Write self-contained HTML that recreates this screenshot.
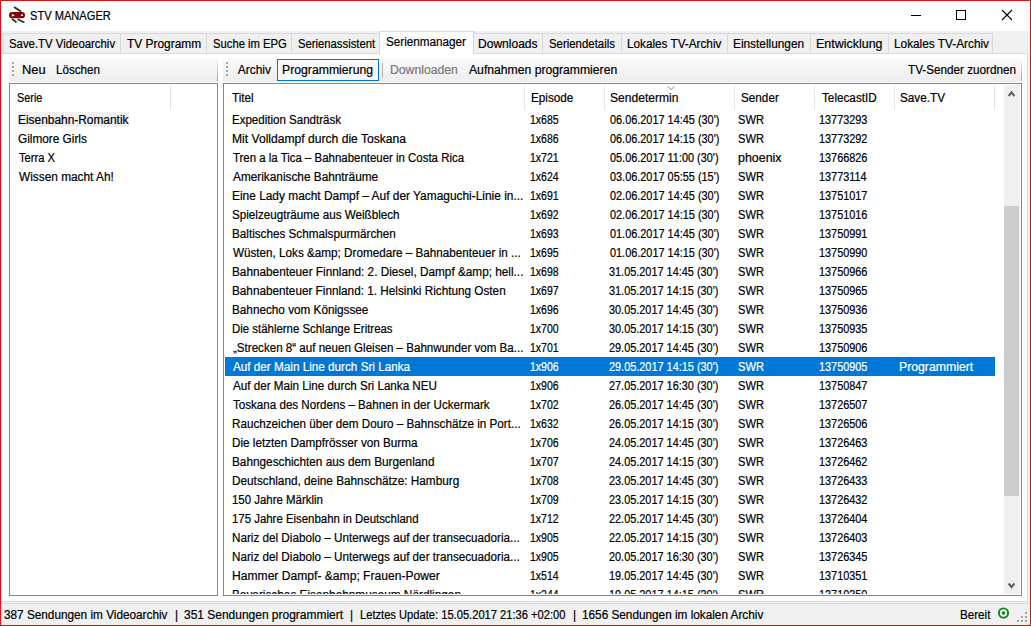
<!DOCTYPE html><html><head><meta charset="utf-8"><style>
*{margin:0;padding:0;box-sizing:border-box}
html,body{width:1031px;height:626px;overflow:hidden;background:#f0f0f0}
body{position:relative;font-family:"Liberation Sans",sans-serif;font-size:12px;color:#000}
.a{position:absolute}
.t{position:absolute;white-space:nowrap;line-height:19px;height:19px;transform-origin:0 0;-webkit-text-stroke:0.2px currentColor}
#win{position:absolute;left:0;top:0;width:1031px;height:626px;border:1px solid #dc1212}
</style></head><body>
<div class="a" style="left:1px;top:1px;width:1029px;height:30px;background:#fff"></div>
<svg class="a" style="left:0;top:0" width="32" height="26" viewBox="0 0 32 26">
<path d="M14.6 7.4 L20.6 11.2" stroke="#2e3333" stroke-width="1.9" stroke-linecap="round"/>
<path d="M12.4 19.3 L16 22" stroke="#2e3333" stroke-width="1.7" stroke-linecap="round"/>
<path d="M18.2 19.4 L23.8 22.2" stroke="#2e3333" stroke-width="1.7" stroke-linecap="round"/>
<rect x="9" y="11.9" width="16" height="6.4" rx="3.2" fill="#820000"/>
<path d="M11.8 14 L15 15.3 L11.8 16.7 Z" fill="#fff"/>
<rect x="20.9" y="14.5" width="2.1" height="1.5" fill="#fff"/>
</svg>
<div class="t" style="left:29.67px;top:7px;transform:scaleX(0.9256)">STV MANAGER</div>
<div class="a" style="left:911px;top:15px;width:10px;height:1px;background:#000"></div>
<div class="a" style="left:956px;top:10px;width:10px;height:10px;border:1px solid #000"></div>
<svg class="a" style="left:1001px;top:9px" width="12" height="12" viewBox="0 0 12 12"><path d="M1 1 L11 11 M11 1 L1 11" stroke="#000" stroke-width="1.1"/></svg>
<div class="a" style="left:1px;top:53px;width:1027px;height:549px;background:#fff;border:1px solid #dadada;border-left:none"></div>
<div class="a" style="left:3px;top:33px;width:118px;height:21px;background:#f0f0f0;border:1px solid #d9d9d9"></div>
<div class="t" style="left:8.85px;top:35px;transform:scaleX(0.9486)">Save.TV Videoarchiv</div>
<div class="a" style="left:120px;top:33px;width:87px;height:21px;background:#f0f0f0;border:1px solid #d9d9d9"></div>
<div class="t" style="left:127.30px;top:35px;transform:scaleX(0.9932)">TV Programm</div>
<div class="a" style="left:206px;top:33px;width:86px;height:21px;background:#f0f0f0;border:1px solid #d9d9d9"></div>
<div class="t" style="left:212.56px;top:35px;transform:scaleX(0.9377)">Suche im EPG</div>
<div class="a" style="left:291px;top:33px;width:91px;height:21px;background:#f0f0f0;border:1px solid #d9d9d9"></div>
<div class="t" style="left:297.86px;top:35px;transform:scaleX(0.9395)">Serienassistent</div>
<div class="a" style="left:471px;top:33px;width:72px;height:21px;background:#f0f0f0;border:1px solid #d9d9d9"></div>
<div class="t" style="left:477.60px;top:35px;transform:scaleX(1.0034)">Downloads</div>
<div class="a" style="left:542px;top:33px;width:80px;height:21px;background:#f0f0f0;border:1px solid #d9d9d9"></div>
<div class="t" style="left:549.15px;top:35px;transform:scaleX(0.9500)">Seriendetails</div>
<div class="a" style="left:621px;top:33px;width:107px;height:21px;background:#f0f0f0;border:1px solid #d9d9d9"></div>
<div class="t" style="left:627.02px;top:35px;transform:scaleX(0.9781)">Lokales TV-Archiv</div>
<div class="a" style="left:727px;top:33px;width:84px;height:21px;background:#f0f0f0;border:1px solid #d9d9d9"></div>
<div class="t" style="left:733.41px;top:35px;transform:scaleX(0.9873)">Einstellungen</div>
<div class="a" style="left:810px;top:33px;width:79px;height:21px;background:#f0f0f0;border:1px solid #d9d9d9"></div>
<div class="t" style="left:816.46px;top:35px;transform:scaleX(1.0387)">Entwicklung</div>
<div class="a" style="left:888px;top:33px;width:105px;height:21px;background:#f0f0f0;border:1px solid #d9d9d9"></div>
<div class="t" style="left:893.72px;top:35px;transform:scaleX(0.9844)">Lokales TV-Archiv</div>
<div class="a" style="left:379px;top:31px;width:95px;height:23px;background:#fff;border:1px solid #d9d9d9;border-bottom:none"></div>
<div class="t" style="left:386.32px;top:33px;transform:scaleX(0.9753)">Serienmanager</div>
<div class="a" style="left:9px;top:58px;width:209px;height:24px;border-radius:3px;background:linear-gradient(#fafafa,#ededed)"></div><div class="a" style="left:217px;top:60px;width:1px;height:21px;background:linear-gradient(#f2f2f2,#9a9a9a)"></div>
<div class="a" style="left:223px;top:58px;width:799px;height:24px;border-radius:3px;background:linear-gradient(#fafafa,#ededed)"></div><div class="a" style="left:1021px;top:60px;width:1px;height:21px;background:linear-gradient(#f2f2f2,#9a9a9a)"></div>
<div class="a" style="left:12px;top:62px;width:2px;height:2px;background:#a6a6a6"></div><div class="a" style="left:12px;top:66px;width:2px;height:2px;background:#a6a6a6"></div><div class="a" style="left:12px;top:70px;width:2px;height:2px;background:#a6a6a6"></div><div class="a" style="left:12px;top:74px;width:2px;height:2px;background:#a6a6a6"></div>
<div class="a" style="left:226px;top:62px;width:2px;height:2px;background:#a6a6a6"></div><div class="a" style="left:226px;top:66px;width:2px;height:2px;background:#a6a6a6"></div><div class="a" style="left:226px;top:70px;width:2px;height:2px;background:#a6a6a6"></div><div class="a" style="left:226px;top:74px;width:2px;height:2px;background:#a6a6a6"></div>
<div class="t" style="left:22.33px;top:61px;transform:scaleX(1.0700)">Neu</div>
<div class="t" style="left:55.53px;top:61px;transform:scaleX(0.9705)">Löschen</div>
<div class="t" style="left:237.70px;top:61px;transform:scaleX(1.0000)">Archiv</div>
<div class="a" style="left:277px;top:59px;width:102px;height:22px;border:1px solid #0078d7;background:#f8f8f8"></div>
<div class="t" style="left:281.68px;top:61px;transform:scaleX(1.0193)">Programmierung</div>
<div class="a" style="left:382px;top:63px;width:1px;height:15px;background:#b8b8b8"></div>
<div class="t" style="left:389.58px;top:61px;color:#787878;transform:scaleX(1.0169)">Downloaden</div>
<div class="t" style="left:468.50px;top:61px;transform:scaleX(1.0144)">Aufnahmen programmieren</div>
<div class="t" style="left:907.80px;top:61px;transform:scaleX(0.9755)">TV-Sender zuordnen</div>
<div class="a" style="left:9px;top:83px;width:209px;height:513px;border:1px solid #828790;background:#fff"></div>
<div class="a" style="left:170px;top:85px;width:1px;height:25px;background:#e5e5e5"></div>
<div class="t" style="left:16.90px;top:89px;transform:scaleX(0.9037)">Serie</div>
<div class="a" style="left:17px;top:112px;width:112px;height:15px;background:#f0f0f0"></div>
<div class="t" style="left:18.01px;top:111px;transform:scaleX(0.9918)">Eisenbahn-Romantik</div>
<div class="t" style="left:17.52px;top:130px;transform:scaleX(0.9841)">Gilmore Girls</div>
<div class="t" style="left:18.90px;top:149px;transform:scaleX(0.9316)">Terra X</div>
<div class="t" style="left:18.90px;top:168px;transform:scaleX(0.9874)">Wissen macht Ah!</div>
<div class="a" style="left:223px;top:83px;width:799px;height:513px;border:1px solid #828790;background:#fff;overflow:hidden">
<div class="a" style="left:300px;top:1px;width:1px;height:25px;background:#e5e5e5"></div>
<div class="a" style="left:380px;top:1px;width:1px;height:25px;background:#e5e5e5"></div>
<div class="a" style="left:510px;top:1px;width:1px;height:25px;background:#e5e5e5"></div>
<div class="a" style="left:590px;top:1px;width:1px;height:25px;background:#e5e5e5"></div>
<div class="a" style="left:670px;top:1px;width:1px;height:25px;background:#e5e5e5"></div>
<div class="a" style="left:770px;top:1px;width:1px;height:25px;background:#e5e5e5"></div>
<div class="t" style="left:7.80px;top:5px;transform:scaleX(0.9770)">Titel</div>
<div class="t" style="left:306.72px;top:5px;transform:scaleX(0.9770)">Episode</div>
<div class="t" style="left:386.49px;top:5px;transform:scaleX(1.0061)">Sendetermin</div>
<div class="t" style="left:516.62px;top:5px;transform:scaleX(0.9770)">Sender</div>
<div class="t" style="left:597.90px;top:5px;transform:scaleX(0.9770)">TelecastID</div>
<div class="t" style="left:676.32px;top:5px;transform:scaleX(0.9770)">Save.TV</div>
<svg class="a" style="left:443px;top:1px" width="9" height="6" viewBox="0 0 9 6"><path d="M0.5 1.2 L4 4.6 L7.5 1.2" stroke="#8a8a8a" fill="none" stroke-width="1"/></svg>
<div class="a" style="left:0;top:26px;width:780px;height:484px;overflow:hidden">
<div class="t" style="left:8.14px;top:1px;transform:scaleX(0.9607)">Expedition Sandträsk</div>
<div class="t" style="left:305.53px;top:1px;transform:scaleX(0.8742)">1x685</div>
<div class="t" style="left:385.60px;top:1px;transform:scaleX(0.9083)">06.06.2017 14:45 (30')</div>
<div class="t" style="left:514.37px;top:1px;transform:scaleX(0.9269)">SWR</div>
<div class="t" style="left:594.99px;top:1px;transform:scaleX(0.9058)">13773293</div>
<div class="t" style="left:8.09px;top:20px;transform:scaleX(1.0088)">Mit Volldampf durch die Toskana</div>
<div class="t" style="left:305.53px;top:20px;transform:scaleX(0.8742)">1x686</div>
<div class="t" style="left:385.60px;top:20px;transform:scaleX(0.9083)">06.06.2017 14:15 (30')</div>
<div class="t" style="left:514.37px;top:20px;transform:scaleX(0.9269)">SWR</div>
<div class="t" style="left:594.99px;top:20px;transform:scaleX(0.9058)">13773292</div>
<div class="t" style="left:9.10px;top:39px;transform:scaleX(0.9533)">Tren a la Tica – Bahnabenteuer in Costa Rica</div>
<div class="t" style="left:305.53px;top:39px;transform:scaleX(0.8742)">1x721</div>
<div class="t" style="left:385.60px;top:39px;transform:scaleX(0.9083)">05.06.2017 11:00 (30')</div>
<div class="t" style="left:514.26px;top:39px;transform:scaleX(1.0366)">phoenix</div>
<div class="t" style="left:594.99px;top:39px;transform:scaleX(0.9058)">13766826</div>
<div class="t" style="left:9.10px;top:58px;transform:scaleX(0.9844)">Amerikanische Bahnträume</div>
<div class="t" style="left:305.53px;top:58px;transform:scaleX(0.8742)">1x624</div>
<div class="t" style="left:385.60px;top:58px;transform:scaleX(0.9083)">03.06.2017 05:55 (15')</div>
<div class="t" style="left:514.37px;top:58px;transform:scaleX(0.9269)">SWR</div>
<div class="t" style="left:594.99px;top:58px;transform:scaleX(0.9058)">13773114</div>
<div class="t" style="left:8.11px;top:77px;transform:scaleX(0.9918)">Eine Lady macht Dampf – Auf der Yamaguchi-Linie in...</div>
<div class="t" style="left:305.53px;top:77px;transform:scaleX(0.8742)">1x691</div>
<div class="t" style="left:385.60px;top:77px;transform:scaleX(0.9083)">02.06.2017 14:45 (30')</div>
<div class="t" style="left:514.37px;top:77px;transform:scaleX(0.9269)">SWR</div>
<div class="t" style="left:594.99px;top:77px;transform:scaleX(0.9058)">13751017</div>
<div class="t" style="left:8.13px;top:96px;transform:scaleX(0.9713)">Spielzeugträume aus Weißblech</div>
<div class="t" style="left:305.53px;top:96px;transform:scaleX(0.8742)">1x692</div>
<div class="t" style="left:385.60px;top:96px;transform:scaleX(0.9083)">02.06.2017 14:15 (30')</div>
<div class="t" style="left:514.37px;top:96px;transform:scaleX(0.9269)">SWR</div>
<div class="t" style="left:594.99px;top:96px;transform:scaleX(0.9058)">13751016</div>
<div class="t" style="left:8.13px;top:115px;transform:scaleX(0.9749)">Baltisches Schmalspurmärchen</div>
<div class="t" style="left:305.53px;top:115px;transform:scaleX(0.8742)">1x693</div>
<div class="t" style="left:385.60px;top:115px;transform:scaleX(0.9083)">01.06.2017 14:45 (30')</div>
<div class="t" style="left:514.37px;top:115px;transform:scaleX(0.9269)">SWR</div>
<div class="t" style="left:594.99px;top:115px;transform:scaleX(0.9058)">13750991</div>
<div class="t" style="left:9.10px;top:134px;transform:scaleX(0.9739)">Wüsten, Loks &amp;amp; Dromedare – Bahnabenteuer in ...</div>
<div class="t" style="left:305.53px;top:134px;transform:scaleX(0.8742)">1x695</div>
<div class="t" style="left:385.60px;top:134px;transform:scaleX(0.9083)">01.06.2017 14:15 (30')</div>
<div class="t" style="left:514.37px;top:134px;transform:scaleX(0.9269)">SWR</div>
<div class="t" style="left:594.99px;top:134px;transform:scaleX(0.9058)">13750990</div>
<div class="t" style="left:8.12px;top:153px;transform:scaleX(0.9817)">Bahnabenteuer Finnland: 2. Diesel, Dampf &amp;amp; hell...</div>
<div class="t" style="left:305.53px;top:153px;transform:scaleX(0.8742)">1x698</div>
<div class="t" style="left:384.69px;top:153px;transform:scaleX(0.9083)">31.05.2017 14:45 (30')</div>
<div class="t" style="left:514.37px;top:153px;transform:scaleX(0.9269)">SWR</div>
<div class="t" style="left:594.99px;top:153px;transform:scaleX(0.9058)">13750966</div>
<div class="t" style="left:8.12px;top:172px;transform:scaleX(0.9791)">Bahnabenteuer Finnland: 1. Helsinki Richtung Osten</div>
<div class="t" style="left:305.53px;top:172px;transform:scaleX(0.8742)">1x697</div>
<div class="t" style="left:384.69px;top:172px;transform:scaleX(0.9083)">31.05.2017 14:15 (30')</div>
<div class="t" style="left:514.37px;top:172px;transform:scaleX(0.9269)">SWR</div>
<div class="t" style="left:594.99px;top:172px;transform:scaleX(0.9058)">13750965</div>
<div class="t" style="left:8.12px;top:191px;transform:scaleX(0.9783)">Bahnecho vom Königssee</div>
<div class="t" style="left:305.53px;top:191px;transform:scaleX(0.8742)">1x696</div>
<div class="t" style="left:384.69px;top:191px;transform:scaleX(0.9083)">30.05.2017 14:45 (30')</div>
<div class="t" style="left:514.37px;top:191px;transform:scaleX(0.9269)">SWR</div>
<div class="t" style="left:594.99px;top:191px;transform:scaleX(0.9058)">13750936</div>
<div class="t" style="left:8.15px;top:210px;transform:scaleX(0.9515)">Die stählerne Schlange Eritreas</div>
<div class="t" style="left:305.53px;top:210px;transform:scaleX(0.8742)">1x700</div>
<div class="t" style="left:384.69px;top:210px;transform:scaleX(0.9083)">30.05.2017 14:15 (30')</div>
<div class="t" style="left:514.37px;top:210px;transform:scaleX(0.9269)">SWR</div>
<div class="t" style="left:594.99px;top:210px;transform:scaleX(0.9058)">13750935</div>
<div class="t" style="left:9.10px;top:229px;transform:scaleX(0.9653)">„Strecken 8“ auf neuen Gleisen – Bahnwunder vom Ba...</div>
<div class="t" style="left:305.53px;top:229px;transform:scaleX(0.8742)">1x701</div>
<div class="t" style="left:384.69px;top:229px;transform:scaleX(0.9083)">29.05.2017 14:45 (30')</div>
<div class="t" style="left:514.37px;top:229px;transform:scaleX(0.9269)">SWR</div>
<div class="t" style="left:594.99px;top:229px;transform:scaleX(0.9058)">13750906</div>
<div class="a" style="left:1px;top:247px;width:770px;height:19px;background:#0078d7"></div>
<div class="t" style="left:9.10px;top:248px;color:#fff;transform:scaleX(0.9762)">Auf der Main Line durch Sri Lanka</div>
<div class="t" style="left:305.53px;top:248px;color:#fff;transform:scaleX(0.8742)">1x906</div>
<div class="t" style="left:384.69px;top:248px;color:#fff;transform:scaleX(0.9083)">29.05.2017 14:15 (30')</div>
<div class="t" style="left:514.37px;top:248px;color:#fff;transform:scaleX(0.9269)">SWR</div>
<div class="t" style="left:594.99px;top:248px;color:#fff;transform:scaleX(0.9058)">13750905</div>
<div class="t" style="left:674.78px;top:248px;color:#fff;transform:scaleX(1.0208)">Programmiert</div>
<div class="t" style="left:9.10px;top:267px;transform:scaleX(0.9708)">Auf der Main Line durch Sri Lanka NEU</div>
<div class="t" style="left:305.53px;top:267px;transform:scaleX(0.8742)">1x906</div>
<div class="t" style="left:384.69px;top:267px;transform:scaleX(0.9083)">27.05.2017 16:30 (30')</div>
<div class="t" style="left:514.37px;top:267px;transform:scaleX(0.9269)">SWR</div>
<div class="t" style="left:594.99px;top:267px;transform:scaleX(0.9058)">13750847</div>
<div class="t" style="left:9.10px;top:286px;transform:scaleX(0.9668)">Toskana des Nordens – Bahnen in der Uckermark</div>
<div class="t" style="left:305.53px;top:286px;transform:scaleX(0.8742)">1x702</div>
<div class="t" style="left:384.69px;top:286px;transform:scaleX(0.9083)">26.05.2017 14:45 (30')</div>
<div class="t" style="left:514.37px;top:286px;transform:scaleX(0.9269)">SWR</div>
<div class="t" style="left:594.99px;top:286px;transform:scaleX(0.9058)">13726507</div>
<div class="t" style="left:8.13px;top:305px;transform:scaleX(0.9725)">Rauchzeichen über dem Douro – Bahnschätze in Port...</div>
<div class="t" style="left:305.53px;top:305px;transform:scaleX(0.8742)">1x632</div>
<div class="t" style="left:384.69px;top:305px;transform:scaleX(0.9083)">26.05.2017 14:15 (30')</div>
<div class="t" style="left:514.37px;top:305px;transform:scaleX(0.9269)">SWR</div>
<div class="t" style="left:594.99px;top:305px;transform:scaleX(0.9058)">13726506</div>
<div class="t" style="left:8.12px;top:324px;transform:scaleX(0.9762)">Die letzten Dampfrösser von Burma</div>
<div class="t" style="left:305.53px;top:324px;transform:scaleX(0.8742)">1x706</div>
<div class="t" style="left:384.69px;top:324px;transform:scaleX(0.9083)">24.05.2017 14:45 (30')</div>
<div class="t" style="left:514.37px;top:324px;transform:scaleX(0.9269)">SWR</div>
<div class="t" style="left:594.99px;top:324px;transform:scaleX(0.9058)">13726463</div>
<div class="t" style="left:8.12px;top:343px;transform:scaleX(0.9820)">Bahngeschichten aus dem Burgenland</div>
<div class="t" style="left:305.53px;top:343px;transform:scaleX(0.8742)">1x707</div>
<div class="t" style="left:384.69px;top:343px;transform:scaleX(0.9083)">24.05.2017 14:15 (30')</div>
<div class="t" style="left:514.37px;top:343px;transform:scaleX(0.9269)">SWR</div>
<div class="t" style="left:594.99px;top:343px;transform:scaleX(0.9058)">13726462</div>
<div class="t" style="left:8.12px;top:362px;transform:scaleX(0.9817)">Deutschland, deine Bahnschätze: Hamburg</div>
<div class="t" style="left:305.53px;top:362px;transform:scaleX(0.8742)">1x708</div>
<div class="t" style="left:384.69px;top:362px;transform:scaleX(0.9083)">23.05.2017 14:45 (30')</div>
<div class="t" style="left:514.37px;top:362px;transform:scaleX(0.9269)">SWR</div>
<div class="t" style="left:594.99px;top:362px;transform:scaleX(0.9058)">13726433</div>
<div class="t" style="left:8.15px;top:381px;transform:scaleX(0.9532)">150 Jahre Märklin</div>
<div class="t" style="left:305.53px;top:381px;transform:scaleX(0.8742)">1x709</div>
<div class="t" style="left:384.69px;top:381px;transform:scaleX(0.9083)">23.05.2017 14:15 (30')</div>
<div class="t" style="left:514.37px;top:381px;transform:scaleX(0.9269)">SWR</div>
<div class="t" style="left:594.99px;top:381px;transform:scaleX(0.9058)">13726432</div>
<div class="t" style="left:8.15px;top:400px;transform:scaleX(0.9508)">175 Jahre Eisenbahn in Deutschland</div>
<div class="t" style="left:305.53px;top:400px;transform:scaleX(0.8742)">1x712</div>
<div class="t" style="left:384.69px;top:400px;transform:scaleX(0.9083)">22.05.2017 14:45 (30')</div>
<div class="t" style="left:514.37px;top:400px;transform:scaleX(0.9269)">SWR</div>
<div class="t" style="left:594.99px;top:400px;transform:scaleX(0.9058)">13726404</div>
<div class="t" style="left:8.13px;top:419px;transform:scaleX(0.9741)">Nariz del Diabolo – Unterwegs auf der transecuadoria...</div>
<div class="t" style="left:305.53px;top:419px;transform:scaleX(0.8742)">1x905</div>
<div class="t" style="left:384.69px;top:419px;transform:scaleX(0.9083)">22.05.2017 14:15 (30')</div>
<div class="t" style="left:514.37px;top:419px;transform:scaleX(0.9269)">SWR</div>
<div class="t" style="left:594.99px;top:419px;transform:scaleX(0.9058)">13726403</div>
<div class="t" style="left:8.13px;top:438px;transform:scaleX(0.9741)">Nariz del Diabolo – Unterwegs auf der transecuadoria...</div>
<div class="t" style="left:305.53px;top:438px;transform:scaleX(0.8742)">1x905</div>
<div class="t" style="left:384.69px;top:438px;transform:scaleX(0.9083)">20.05.2017 16:30 (30')</div>
<div class="t" style="left:514.37px;top:438px;transform:scaleX(0.9269)">SWR</div>
<div class="t" style="left:594.99px;top:438px;transform:scaleX(0.9058)">13726345</div>
<div class="t" style="left:8.09px;top:457px;transform:scaleX(1.0083)">Hammer Dampf- &amp;amp; Frauen-Power</div>
<div class="t" style="left:305.53px;top:457px;transform:scaleX(0.8742)">1x514</div>
<div class="t" style="left:384.69px;top:457px;transform:scaleX(0.9083)">19.05.2017 14:45 (30')</div>
<div class="t" style="left:514.37px;top:457px;transform:scaleX(0.9269)">SWR</div>
<div class="t" style="left:594.99px;top:457px;transform:scaleX(0.9058)">13710351</div>
<div class="t" style="left:8.12px;top:476px;transform:scaleX(0.9835)">Bayerisches Eisenbahnmuseum Nördlingen</div>
<div class="t" style="left:305.53px;top:476px;transform:scaleX(0.8742)">1x244</div>
<div class="t" style="left:384.69px;top:476px;transform:scaleX(0.9083)">19.05.2017 14:15 (30')</div>
<div class="t" style="left:514.37px;top:476px;transform:scaleX(0.9269)">SWR</div>
<div class="t" style="left:594.99px;top:476px;transform:scaleX(0.9058)">13710350</div>
</div>
<div class="a" style="left:780px;top:1px;width:16px;height:509px;background:#f0f0f0"></div>
<div class="a" style="left:780px;top:122px;width:15px;height:290px;background:#cdcdcd"></div>
<svg class="a" style="left:783px;top:6px" width="10" height="8" viewBox="0 0 10 8"><path d="M1.6 6.0 L4.5 2.4 L7.4 6.0" stroke="#5d5d5d" fill="none" stroke-width="2"/></svg>
<svg class="a" style="left:783px;top:498px" width="10" height="8" viewBox="0 0 10 8"><path d="M1.6 1.5 L4.5 5.1 L7.4 1.5" stroke="#5d5d5d" fill="none" stroke-width="2"/></svg>
</div>
<div class="a" style="left:1px;top:603px;width:1028px;height:22px;background:#f0f0f0;border-top:1px solid #dadada"></div>
<div class="t" style="left:4.02px;top:606px;transform:scaleX(0.9813)">387 Sendungen im Videoarchiv</div>
<div class="t" style="left:175.02px;top:606px;transform:scaleX(0.9770)">|</div>
<div class="t" style="left:184.30px;top:606px;transform:scaleX(0.9975)">351 Sendungen programmiert</div>
<div class="t" style="left:350.12px;top:606px;transform:scaleX(0.9770)">|</div>
<div class="t" style="left:359.77px;top:606px;transform:scaleX(0.9291)">Letztes Update: 15.05.2017 21:36 +02:00</div>
<div class="t" style="left:572.62px;top:606px;transform:scaleX(0.9770)">|</div>
<div class="t" style="left:581.62px;top:606px;transform:scaleX(0.9810)">1656 Sendungen im lokalen Archiv</div>
<div class="t" style="left:959.83px;top:606px;transform:scaleX(0.9700)">Bereit</div>
<svg class="a" style="left:997px;top:607px" width="12" height="12" viewBox="0 0 12 12"><circle cx="6.5" cy="6" r="4.6" stroke="#0a850a" stroke-width="1.9" fill="#fff"/><circle cx="6.5" cy="6" r="1.8" fill="#0a850a"/></svg>
<div class="a" style="left:1025px;top:612px;width:2px;height:2px;background:#9c9c9c;box-shadow:1px 1px 0 #fff"></div>
<div class="a" style="left:1021px;top:616px;width:2px;height:2px;background:#9c9c9c;box-shadow:1px 1px 0 #fff"></div>
<div class="a" style="left:1025px;top:616px;width:2px;height:2px;background:#9c9c9c;box-shadow:1px 1px 0 #fff"></div>
<div class="a" style="left:1017px;top:620px;width:2px;height:2px;background:#9c9c9c;box-shadow:1px 1px 0 #fff"></div>
<div class="a" style="left:1021px;top:620px;width:2px;height:2px;background:#9c9c9c;box-shadow:1px 1px 0 #fff"></div>
<div class="a" style="left:1025px;top:620px;width:2px;height:2px;background:#9c9c9c;box-shadow:1px 1px 0 #fff"></div>
<div id="win"></div>
</body></html>
